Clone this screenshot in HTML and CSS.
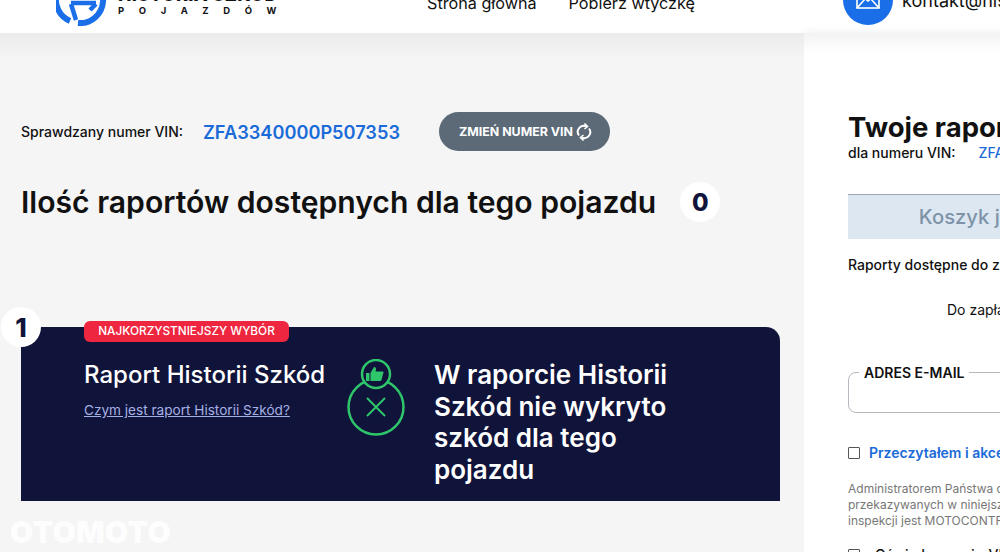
FILE: index.html
```html
<!DOCTYPE html>
<html lang="pl">
<head>
    <meta charset="UTF-8">
    <meta name="viewport" content="width=device-width, initial-scale=1.0">
    <title>Historia Szkód Pojazdów</title>
    <link rel="stylesheet" href="styles.css">
</head>
<body>
    <div class="page">
        <header class="header">
            <a class="logo" href="#">
                <svg class="logo-icon" width="52" height="52" viewBox="0 0 52 52" fill="none" stroke="#1a6fe8" stroke-width="6">
                    <path d="M14 47A23 23 0 0 1 26 3"/>
                    <path d="M22 49A23 23 0 1 0 26 3"/>
                    <path d="M15 29H40M15 30L20 46M40 30L34 36" stroke-width="4.500"/>
                </svg>
                <div class="logo-text">
                    <div class="logo-name">HISTORIA SZKÓD</div>
                    <div class="logo-sub">POJAZDÓW</div>
                </div>
            </a>
            <nav class="nav">
                <a href="#">Strona główna</a>
                <a href="#">Pobierz wtyczkę</a>
            </nav>
            <div class="contact">
                <span class="contact-icon">
                    <svg width="24" height="18" viewBox="0 0 24 18" fill="none" stroke="#fff" stroke-width="1.6">
                        <rect x="1" y="1" width="22" height="16"/>
                        <path d="M1 1l11 9 11-9M1 17l8-9M23 17l-8-9"/>
                    </svg>
                </span>
                <span>kontakt@historiaszkod.pl</span>
            </div>
        </header>

        <div class="columns">
            <main class="left">
                <div class="vin-row">
                    <span class="vin-label">Sprawdzany numer VIN:</span>
                    <span class="vin-number">ZFA3340000P507353</span>
                    <a class="change-btn" href="#">
                        ZMIEŃ NUMER VIN
                        <svg width="16" height="18" viewBox="0 0 16 18" fill="none" stroke="#fff" stroke-width="2">
                            <path d="M3 12.5A6 6 0 0 1 10 3.3"/>
                            <path d="M13 5.5A6 6 0 0 1 6 14.7"/>
                            <path d="M8.5 0.5L11.5 3.5L8.5 6" stroke-width="1.6"/>
                            <path d="M7.5 12L4.5 14.5L7.5 17.5" stroke-width="1.6"/>
                        </svg>
                    </a>
                </div>
                <div class="count-row">
                    <h1 class="count-title">Ilość raportów dostępnych dla tego pojazdu</h1>
                    <span class="count-badge">0</span>
                </div>
                <section class="card">
                    <span class="card-number">1</span>
                    <span class="card-tag">NAJKORZYSTNIEJSZY WYBÓR</span>
                    <div class="card-info">
                        <h2 class="card-title">Raport Historii Szkód</h2>
                        <a class="card-link" href="#">Czym jest raport Historii Szkód?</a>
                    </div>
                    <svg class="card-icon" width="60" height="78" viewBox="0 0 60 78" fill="none" stroke="#2fc56a" stroke-width="2.5">
                        <circle cx="30" cy="48" r="27.5"/>
                        <circle cx="30" cy="15" r="14" fill="#10143a"/>
                        <path d="M21 39L39 57M39 39L21 57" stroke-width="2"/>
                        <path d="M20 14h3.500v8h-3.500zM24.500 14l3.500-6c2 0 2.500 2 1.500 4.500h7c1 0 1.500 1.500 0.500 2.500l-1.500 6c-0.500 1-1 1-2 1h-9z" fill="#2fc56a" stroke="none"/>
                    </svg>
                    <p class="card-result">W raporcie Historii Szkód nie wykryto szkód dla tego pojazdu</p>
                </section>
                <div class="watermark">OTOMOTO</div>
            </main>

            <aside class="right">
                <h2 class="cart-title">Twoje raporty</h2>
                <div class="cart-vin">
                    <span>dla numeru VIN:</span>
                    <span class="cart-vin-number">ZFA3340000P507353</span>
                </div>
                <div class="cart-empty">Koszyk jest pusty</div>
                <p class="cart-note">Raporty dostępne do zakupu: 0</p>
                <p class="cart-total">Do zapłaty: 0 zł</p>
                <fieldset class="email-box">
                    <legend>ADRES E-MAIL</legend>
                </fieldset>
                <label class="check-row">
                    <span class="check"></span>
                    <span class="check-link">Przeczytałem i akceptuję regulamin</span>
                </label>
                <p class="legal">Administratorem Państwa danych osobowych<br>przekazywanych w niniejszym formularzu w celu<br>inspekcji jest MOTOCONTROL sp. z o.o.</p>
                <label class="check-row check-last">
                    <span class="check"></span>
                    <span class="check-text">Oświadczam, że VIN</span>
                </label>
            </aside>
        </div>
    </div>
</body>
</html>
```

FILE: styles.css
```css
html, body {
    margin: 0;
    padding: 0;
    height: 100%;
    overflow: hidden;
}
body {
    font-family: Inter, "Liberation Sans", sans-serif;
    color: #111;
    background-color: #f5f5f5;
}
a {
    color: inherit;
    text-decoration: none;
}
.page {
    width: 1204px;
    margin-top: -33px;
}
.header {
    display: flex;
    align-items: center;
    height: 66px;
    padding-left: 56px;
    background-color: #ffffff;
    box-sizing: border-box;
}
.logo {
    display: flex;
    align-items: center;
    gap: 10px;
    width: 371px;
}
.logo-text {
    padding-top: 2px;
}
.logo-name {
    font-size: 18px;
    font-weight: 800;
    line-height: 20px;
    letter-spacing: 0.4px;
    margin-top: -1px;
}
.logo-sub {
    font-size: 9.500px;
    font-weight: 700;
    line-height: 12px;
    letter-spacing: 14.6px;
}
.nav {
    display: flex;
    gap: 32px;
    width: 416px;
    font-size: 16.200px;
    padding-top: 6px;
}
.contact {
    display: flex;
    align-items: center;
    gap: 9px;
    font-size: 18px;
}
.contact-icon {
    display: flex;
    align-items: center;
    justify-content: center;
    width: 50px;
    height: 50px;
    border-radius: 50%;
    background-color: #1a6fe8;
}
.columns {
    display: flex;
    height: 519px;
}
.left {
    position: relative;
    width: 804px;
    padding-left: 21px;
    box-sizing: border-box;
    background: linear-gradient(#ebebeb, #f5f5f5 26px);
}
.vin-row {
    display: flex;
    align-items: center;
    height: 39px;
    margin-top: 79px;
}
.vin-label {
    width: 182px;
    font-size: 14px;
    font-weight: 500;
}
.vin-number {
    width: 236px;
    font-size: 18.200px;
    font-weight: 600;
    color: #1a6bd8;
}
.change-btn {
    display: flex;
    align-items: center;
    gap: 3px;
    height: 39px;
    padding: 0 18px 0 20px;
    border-radius: 20px;
    background-color: #5c6977;
    color: #ffffff;
    font-size: 12.400px;
    font-weight: 700;
}
.count-row {
    display: flex;
    align-items: center;
    gap: 24px;
    margin-top: 31px;
}
.count-title {
    margin: 0;
    font-size: 30.100px;
    font-weight: 600;
    line-height: 40px;
}
.count-badge {
    display: flex;
    align-items: center;
    justify-content: center;
    width: 40px;
    height: 40px;
    border-radius: 50%;
    background-color: #ffffff;
    color: #10143a;
    font-size: 24px;
    font-weight: 800;
}
.card {
    position: relative;
    display: flex;
    width: 759px;
    height: 174px;
    margin-top: 105px;
    box-sizing: border-box;
    border-radius: 14px 14px 0 0;
    background-color: #10143a;
    color: #ffffff;
}
.card-number {
    position: absolute;
    left: -20px;
    top: -20px;
    display: flex;
    align-items: center;
    justify-content: center;
    width: 40px;
    height: 40px;
    border-radius: 50%;
    background-color: #ffffff;
    color: #10143a;
    font-size: 26px;
    font-weight: 800;
}
.card-tag {
    position: absolute;
    left: 63px;
    top: -6px;
    width: 205px;
    height: 21px;
    line-height: 21px;
    border-radius: 6px;
    background-color: #ee2640;
    font-size: 11.800px;
    font-weight: 500;
    text-align: center;
}
.card-info {
    width: 262px;
    margin-left: 63px;
    padding-top: 32px;
}
.card-title {
    margin: 0;
    font-size: 24px;
    font-weight: 500;
    line-height: 32px;
}
.card-link {
    display: block;
    margin-top: 11px;
    color: #a5b1e6;
    font-size: 13.600px;
    text-decoration: underline;
}
.card-icon {
    margin: 32px 0 0 0;
}
.card-result {
    width: 270px;
    margin: 32px 0 0 28px;
    font-size: 26px;
    font-weight: 600;
    line-height: 31.500px;
}
.watermark {
    position: absolute;
    left: 10px;
    bottom: 2px;
    color: #ffffff;
    font-size: 30px;
    font-weight: 900;
    letter-spacing: 0.3px;
    opacity: 0.85;
}
.right {
    flex: 1;
    padding: 79px 44px 0;
    background: linear-gradient(#f3f3f3, #ffffff 20px);
    box-shadow: 0 0 10px rgba(0, 0, 0, 0.08);
}
.cart-title {
    margin: 0;
    font-size: 27.500px;
    font-weight: 700;
    line-height: 30px;
}
.cart-vin {
    display: flex;
    gap: 23px;
    margin-top: 2px;
    font-size: 14px;
    font-weight: 500;
    line-height: 18px;
}
.cart-vin-number {
    color: #1a6bd8;
}
.cart-empty {
    height: 44px;
    margin-top: 32px;
    line-height: 44px;
    border-top: 1px solid #9aa5b1;
    background-color: #dce7f2;
    color: #7f93a8;
    font-size: 20.200px;
    font-weight: 500;
    text-align: center;
}
.cart-note {
    margin: 17px 0 0;
    font-size: 14px;
    font-weight: 500;
    line-height: 18px;
}
.cart-total {
    margin: 27px 0 0 99px;
    font-size: 14px;
    line-height: 18px;
}
.email-box {
    height: 49px;
    margin: 45px 0 0;
    padding: 0 10px;
    box-sizing: border-box;
    border: 1px solid #b5bac0;
    border-radius: 8px;
}
.email-box legend {
    padding: 0 5px;
    font-size: 14px;
    font-weight: 600;
}
.check-row {
    display: flex;
    align-items: center;
    gap: 9px;
    margin-top: 31px;
    font-size: 14px;
}
.check {
    width: 10px;
    height: 10px;
    border: 1px solid #555;
    border-radius: 1px;
}
.check-link {
    color: #1a6bd8;
    font-weight: 600;
}
.legal {
    margin: 20px 0 0;
    font-size: 12px;
    line-height: 16px;
    color: #777;
}
.check-last {
    gap: 15px;
    margin-top: 17px;
}
.check-text {
    font-weight: 500;
}
```
